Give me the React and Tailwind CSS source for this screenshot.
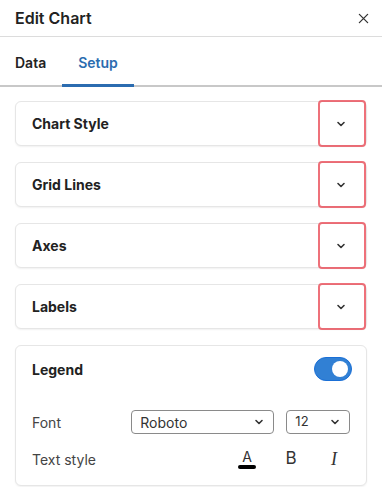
import React, { useState } from "react";

const Chevron = ({ className = "" }) => (
  <svg viewBox="0 0 12 12" className={className} fill="none" stroke="currentColor" strokeWidth="1.6" strokeLinecap="round" strokeLinejoin="round">
    <path d="M3 4.5 L6 7.5 L9 4.5" />
  </svg>
);

const Section = ({ title }) => (
  <div className="flex h-[45px] items-center justify-between rounded-md border border-[#e6e6e6] bg-white shadow-[0_1px_2px_rgba(0,0,0,0.06)]">
    <span className="pl-4 text-[14px] font-bold text-[#222]">{title}</span>
    <button className="flex h-[47px] w-[48px] items-center justify-center rounded-[4px] border-2 border-[#e8414e]/75 pr-[3px] text-[#333]">
      <Chevron className="h-3 w-3" />
    </button>
  </div>
);

const App = () => {
  const [tab, setTab] = useState("Setup");
  const [legend, setLegend] = useState(true);

  return (
    <div className="h-[487px] w-[382px] overflow-hidden bg-white font-['Inter',sans-serif] text-[#222]">
      <div className="flex h-[37px] items-center justify-between border-b border-[#dcdcdc] pl-[15px] pr-[13px]">
        <h1 className="text-[16px] font-semibold text-[#222]">Edit Chart</h1>
        <button className="text-[#333]">
          <svg viewBox="0 0 12 12" className="h-[11px] w-[11px]" stroke="currentColor" strokeWidth="1.4" strokeLinecap="round">
            <path d="M1.5 1.5 L10.5 10.5 M10.5 1.5 L1.5 10.5" />
          </svg>
        </button>
      </div>

      <div className="flex h-[50px] border-b-2 border-[#c8c8c8] pt-[3px]">
        {["Data", "Setup"].map((t, i) => (
          <button
            key={t}
            onClick={() => setTab(t)}
            className={
              "-mb-[2px] flex items-center border-b-[3px] text-[14px] font-semibold " +
              (i === 0 ? "pl-[15px] pr-[16px] " : "px-4 ") +
              (tab === t ? "border-[#2b6cb0] text-[#2b6cb0]" : "border-transparent text-[#222]")
            }
          >
            {t}
          </button>
        ))}
      </div>

      <div className="flex flex-col gap-4 px-[15px] pt-[14px]">
        <Section title="Chart Style" />
        <Section title="Grid Lines" />
        <Section title="Axes" />
        <Section title="Labels" />

        <div className="rounded-md border border-[#e6e6e6] bg-white px-4 pb-[14px] pt-[11px] shadow-[0_1px_2px_rgba(0,0,0,0.06)]">
          <div className="flex h-[24px] items-center justify-between">
            <span className="text-[14px] font-bold text-[#222]">Legend</span>
            <button
              onClick={() => setLegend(!legend)}
              className={
                "mr-[-2px] flex h-[24px] w-[38px] items-center rounded-full border px-[3px] " +
                (legend ? "justify-end border-[#1a6fd6] bg-[#3180d4]" : "justify-start border-[#999] bg-[#ccc]")
              }
            >
              <span className="h-[16px] w-[16px] rounded-full bg-white" />
            </button>
          </div>

          <div className="mt-[29px] flex items-center">
            <span className="w-[100px] text-[14px] text-[#444]">Font</span>
            <div className="flex h-[24px] w-[144px] items-center justify-between rounded-[4px] border border-[#8a8a8a] pl-2 pr-[8px] text-[14px] text-[#333]">
              <span>Roboto</span>
              <Chevron className="h-3 w-3" />
            </div>
            <div className="ml-[12px] flex h-[24px] w-[64px] items-center justify-between rounded-[4px] border border-[#8a8a8a] pl-2 pr-[8px] text-[13px] text-[#333]">
              <span>12</span>
              <Chevron className="h-3 w-3" />
            </div>
          </div>

          <div className="mt-[13px] flex h-[24px] items-center">
            <span className="text-[14px] text-[#444]">Text style</span>
            <div className="ml-auto flex items-center pr-[7px]">
              <div className="flex w-[18px] flex-col items-center">
                <span className="text-[14px] leading-[14px] text-[#333]">A</span>
                <span className="mt-[1px] h-[4px] w-[18px] rounded-full bg-black" />
              </div>
              <span className="ml-[26px] w-[18px] text-center text-[17px] text-[#333]">B</span>
              <span className="ml-[25px] w-[18px] text-center font-['Liberation_Serif',serif] text-[18px] italic text-[#333]">I</span>
            </div>
          </div>
        </div>
      </div>
    </div>
  );
};

export default App;
